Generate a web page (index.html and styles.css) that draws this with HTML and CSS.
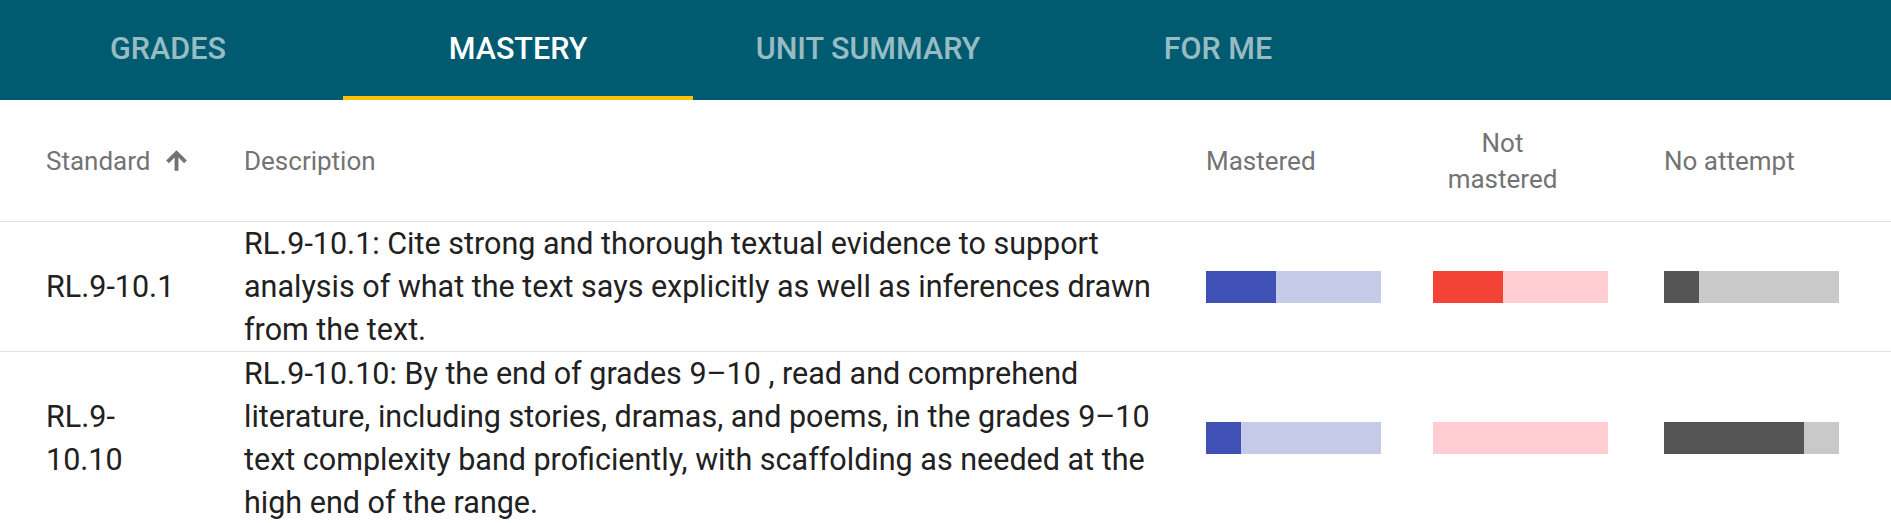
FILE: index.html
```html
<!DOCTYPE html>
<html lang="en">
<head>
    <meta charset="UTF-8">
    <meta name="viewport" content="width=device-width, initial-scale=1.0">
    <title>Mastery</title>
    <link rel="stylesheet" href="styles.css">
</head>
<body>
    <div class="tabs">
        <div class="tab">Grades</div>
        <div class="tab active">Mastery</div>
        <div class="tab">Unit summary</div>
        <div class="tab">For me</div>
    </div>

    <div class="mastery">
        <div class="row head">
            <div class="cell std">
                <span>Standard</span>
                <svg class="sort" viewBox="0 0 24 24"><path d="M4 12l2.1 2.1 4.4-4.4V20h3V9.7l4.4 4.4L20 12l-8-8z"/></svg>
            </div>
            <div class="cell desc">Description</div>
            <div class="cell stat">Mastered</div>
            <div class="cell stat"><span class="twoLine">Not mastered</span></div>
            <div class="cell stat">No attempt</div>
        </div>

        <div class="row">
            <div class="cell std">RL.9-10.1</div>
            <div class="cell desc">RL.9-10.1: Cite strong and thorough textual evidence to support analysis of what the text says explicitly as well as inferences drawn from the text.</div>
            <div class="cell stat"><div class="bar mastered"><span style="width:40%"></span></div></div>
            <div class="cell stat"><div class="bar notMastered"><span style="width:40%"></span></div></div>
            <div class="cell stat"><div class="bar noAttempt"><span style="width:20%"></span></div></div>
        </div>

        <div class="row">
            <div class="cell std">RL.9-10.10</div>
            <div class="cell desc">RL.9-10.10: By the end of grades 9–10 , read and comprehend literature, including stories, dramas, and poems, in the grades 9–10 text complexity band proficiently, with scaffolding as needed at the high end of the range.</div>
            <div class="cell stat"><div class="bar mastered"><span style="width:20%"></span></div></div>
            <div class="cell stat"><div class="bar notMastered"><span style="width:0%"></span></div></div>
            <div class="cell stat"><div class="bar noAttempt"><span style="width:80%"></span></div></div>
        </div>
    </div>
</body>
</html>
```

FILE: styles.css
```css
body {
	margin: 0px;
	padding: 0px;
	font-family: Roboto, "Liberation Sans", sans-serif;
	background-color: white;
	overflow: hidden;
}

/* top tab bar */
.tabs {
	display: flex;
	height: 100px;
	background-color: #005b70;
}
.tab {
	width: 350px;
	flex-shrink: 0;
	box-sizing: border-box;
	display: flex;
	align-items: center;
	justify-content: center;
	border-bottom: 4px solid transparent;
	font-size: 30.5px;
	font-weight: 500;
	text-transform: uppercase;
	color: rgba(255, 255, 255, 0.6);
}
.tab:first-child {
	margin-left: -7px;
}
.tab.active {
	color: white;
	border-bottom-color: #ffc107;
}

/* mastery table */
.row {
	display: grid;
	grid-template-columns: 244px 962px 227px 231px 227px;
	align-items: center;
	border-bottom: 1px solid #e0e0e0;
	font-size: 30.5px;
	line-height: 43px;
	color: #212121;
}
.row.head {
	min-height: 121px;
	font-size: 26px;
	line-height: 36px;
	color: #737373;
}
.cell.std {
	padding-left: 46px;
	padding-right: 62px;
}
.head .cell.std {
	display: flex;
	align-items: center;
	padding-right: 0px;
}
.cell.desc {
	padding-right: 26px;
}
.sort {
	width: 31px;
	height: 31px;
	margin-left: 11px;
	fill: #737373;
}
.twoLine {
	display: block;
	width: 139px;
	text-align: center;
}

/* progress bars */
.bar {
	width: 175px;
	height: 32px;
	display: flex;
}
.bar span {
	display: block;
	height: 100%;
}
.bar.mastered {
	background-color: #c5cae9;
}
.bar.mastered span {
	background-color: #3f51b5;
}
.bar.notMastered {
	background-color: #ffcdd2;
}
.bar.notMastered span {
	background-color: #f44336;
}
.bar.noAttempt {
	background-color: #c9c9c9;
}
.bar.noAttempt span {
	background-color: #555555;
}
```
